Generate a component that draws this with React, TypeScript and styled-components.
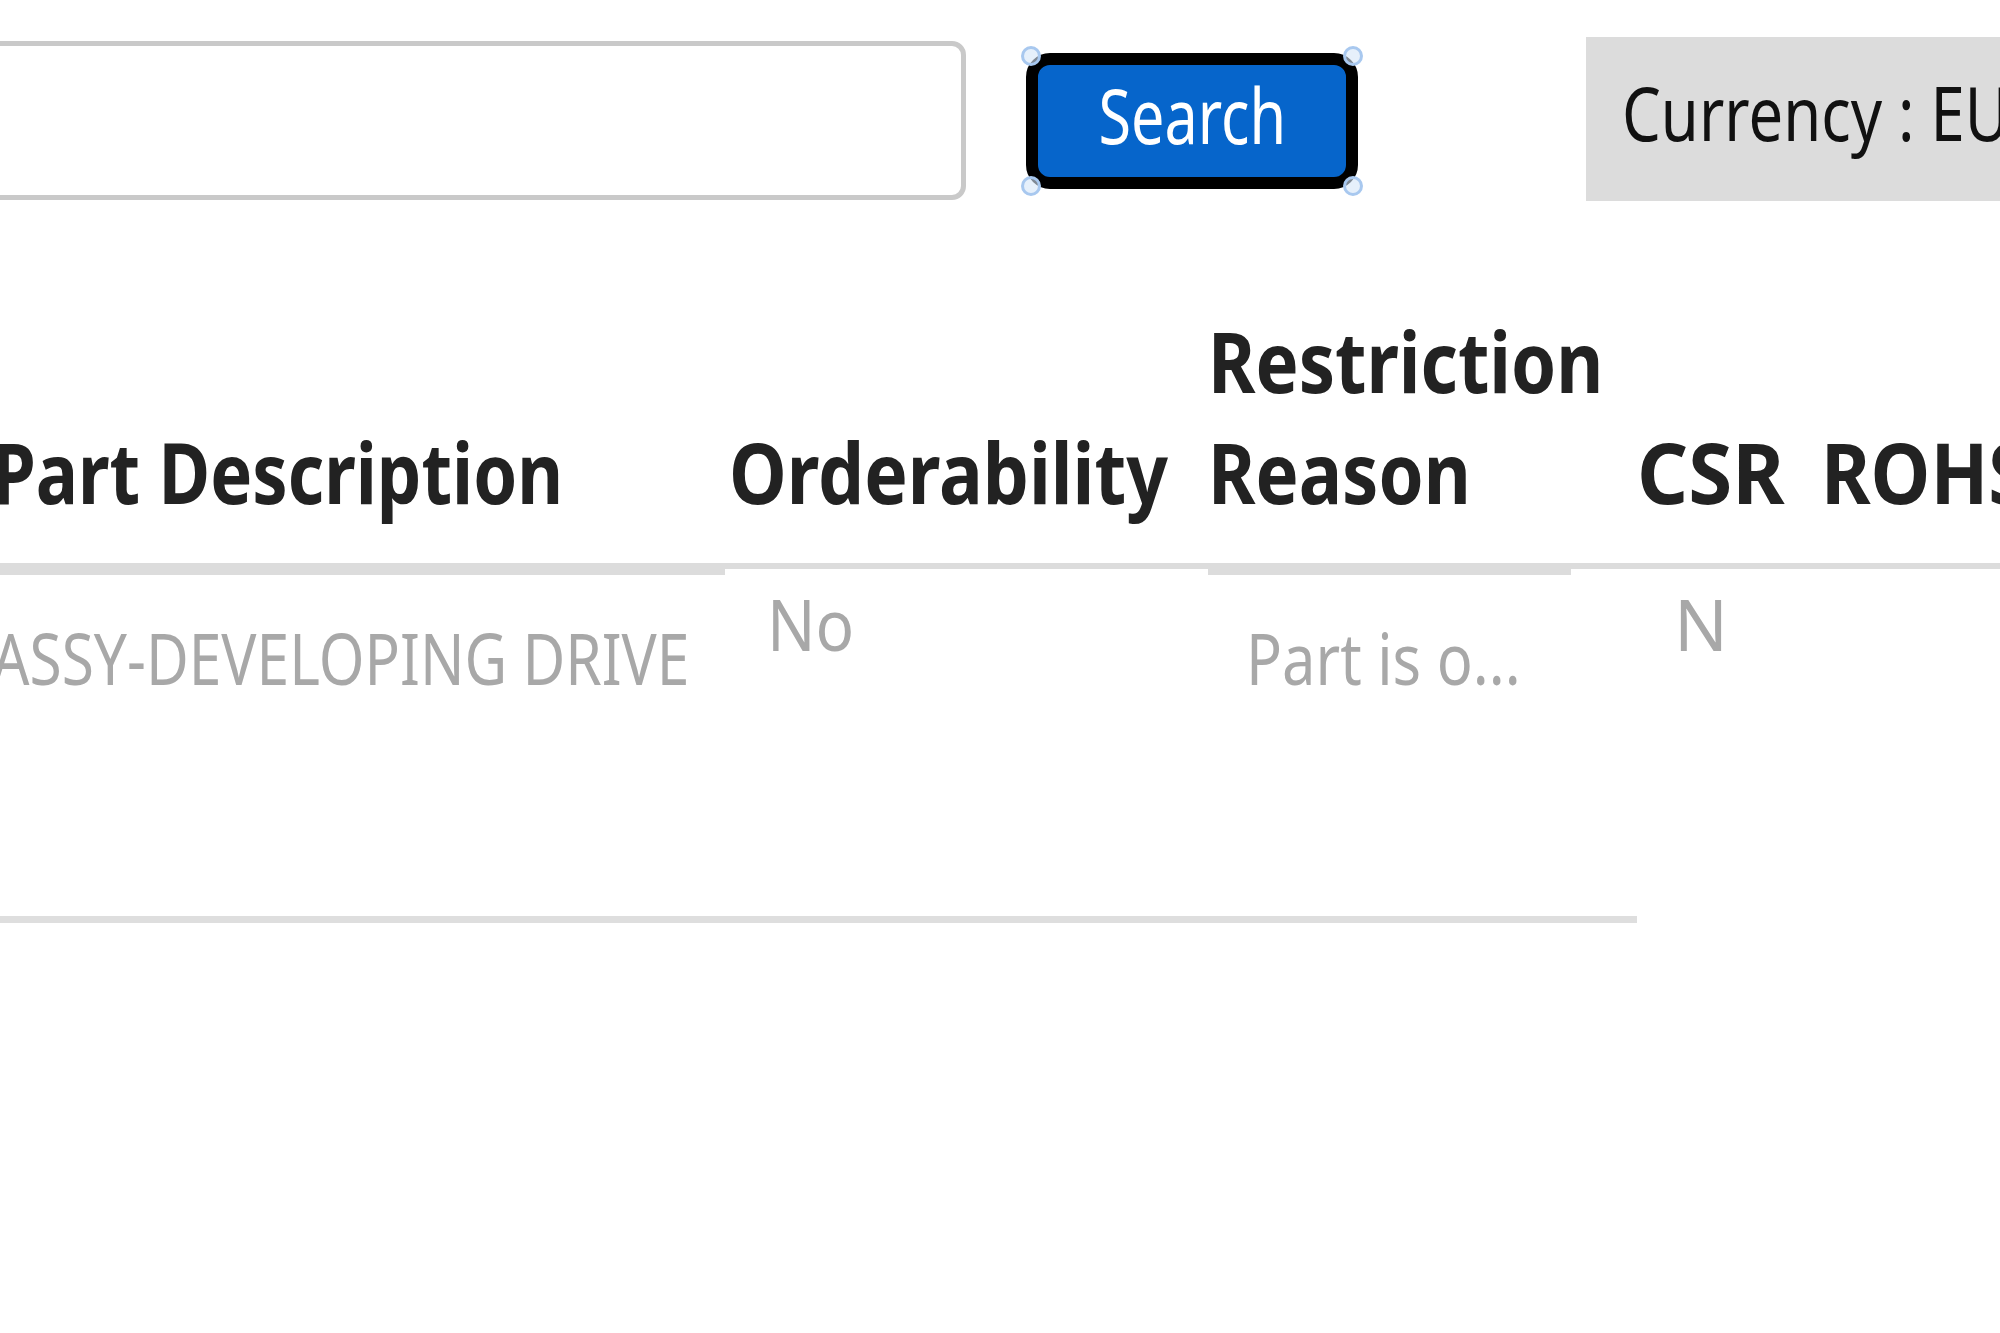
import React from "react";
import styled, { createGlobalStyle } from "styled-components";

const GlobalStyle = createGlobalStyle`
  html, body {
    margin: 0;
    padding: 0;
    background: #ffffff;
  }
  body {
    width: 2000px;
    height: 1333px;
    overflow: hidden;
    font-family: "Noto Sans", "Open Sans", sans-serif;
  }
`;

const Page = styled.div`
  width: 2000px;
  height: 1333px;
  overflow: hidden;
  box-sizing: border-box;
  padding-top: 37px;
`;

const Toolbar = styled.div`
  display: flex;
  align-items: flex-start;
  margin-left: -200px;
`;

const SearchInput = styled.input`
  flex: none;
  box-sizing: border-box;
  width: 1166px;
  height: 159px;
  margin-top: 4px;
  border: 5px solid #c9c9c9;
  border-radius: 14px;
  background: #ffffff;
  outline: none;
`;

const ButtonWrap = styled.div`
  flex: none;
  position: relative;
  margin-left: 60px;
  margin-top: 16px;
`;

const SearchButton = styled.button`
  box-sizing: border-box;
  width: 332px;
  height: 136px;
  border: 12px solid #000000;
  border-radius: 24px;
  background: #0665cb;
  color: #ffffff;
  font-family: "Noto Sans", "Open Sans", sans-serif;
  font-size: 76px;
  line-height: 1;
  padding: 0 0 12px;
  display: flex;
  align-items: center;
  justify-content: center;
`;

/* Narrowed glyph run: the reference text is hinted small type, much narrower than the installed faces */
const Label = styled.span<{ $sx: number; $origin?: string }>`
  display: inline-block;
  transform: scaleX(${(p) => p.$sx});
  transform-origin: ${(p) => p.$origin ?? "left"} center;
`;

const Handle = styled.span<{ $x: "left" | "right"; $y: "top" | "bottom" }>`
  position: absolute;
  width: 14px;
  height: 14px;
  border-radius: 50%;
  border: 3px solid #a8c8ef;
  background: rgba(214, 230, 248, 0.6);
  ${(p) => p.$x}: -5px;
  ${(p) => p.$y}: -7px;
`;

const CurrencyBox = styled.div`
  flex: none;
  box-sizing: border-box;
  margin-left: 228px;
  width: 700px;
  height: 164px;
  background: #dcdcdc;
  display: flex;
  align-items: center;
  padding: 0 0 15px 36px;
  font-size: 75px;
  color: #111111;
  white-space: nowrap;
`;

const Table = styled.div`
  margin-top: 104px;
  margin-left: -8px;
  display: grid;
  grid-template-columns: 733px 483px 363px 66px 184px 400px;
`;

const HeadCell = styled.div<{ $thick?: boolean; $pad?: number }>`
  box-sizing: content-box;
  align-self: start;
  height: 222px;
  padding: 0 0 36px ${(p) => p.$pad ?? 0}px;
  border-bottom: ${(p) => (p.$thick ? 12 : 6)}px solid #dcdcdc;
  display: flex;
  flex-direction: column;
  justify-content: flex-end;
  align-items: flex-start;
  font-weight: 700;
  font-size: 84px;
  line-height: 111px;
  color: #222222;
  white-space: nowrap;
`;

const BodyCell = styled.div<{ $pad?: number; $top: number; $ruled?: boolean }>`
  box-sizing: border-box;
  height: 348px;
  padding: ${(p) => p.$top}px 0 0 ${(p) => p.$pad ?? 0}px;
  border-bottom: 7px solid ${(p) => (p.$ruled ? "#dedede" : "transparent")};
  font-weight: 400;
  font-size: 71px;
  line-height: 97px;
  color: #a8a8a8;
  white-space: nowrap;
`;

export default function App() {
  return (
    <>
      <GlobalStyle />
      <Page>
        <Toolbar>
          <SearchInput type="text" aria-label="Search parts" />
          <ButtonWrap>
            <SearchButton type="button">
              <Label $sx={0.78} $origin="center">
                Search
              </Label>
            </SearchButton>
            <Handle $x="left" $y="top" />
            <Handle $x="right" $y="top" />
            <Handle $x="left" $y="bottom" />
            <Handle $x="right" $y="bottom" />
          </ButtonWrap>
          <CurrencyBox>
            <Label $sx={0.82}>Currency : EUR</Label>
          </CurrencyBox>
        </Toolbar>
        <Table>
          <HeadCell $thick>
            <Label $sx={0.84}>Part Description</Label>
          </HeadCell>
          <HeadCell $pad={4}>
            <Label $sx={0.87}>Orderability</Label>
          </HeadCell>
          <HeadCell $thick $pad={0}>
            <Label $sx={0.862}>
              Restriction
              <br />
              Reason
            </Label>
          </HeadCell>
          <HeadCell />
          <HeadCell>
            <Label $sx={0.95}>CSR</Label>
          </HeadCell>
          <HeadCell>
            <Label $sx={0.9}>ROHS</Label>
          </HeadCell>

          <BodyCell $top={34} $ruled>
            <Label $sx={0.826}>ASSY-DEVELOPING DRIVE</Label>
          </BodyCell>
          <BodyCell $top={0} $pad={42} $ruled>
            <Label $sx={0.9}>No</Label>
          </BodyCell>
          <BodyCell $top={34} $pad={38} $ruled>
            <Label $sx={0.84}>Part is o...</Label>
          </BodyCell>
          <BodyCell $top={0} $ruled />
          <BodyCell $top={0} $pad={37}>
            <Label $sx={1}>N</Label>
          </BodyCell>
          <BodyCell $top={0} />
        </Table>
      </Page>
    </>
  );
}
